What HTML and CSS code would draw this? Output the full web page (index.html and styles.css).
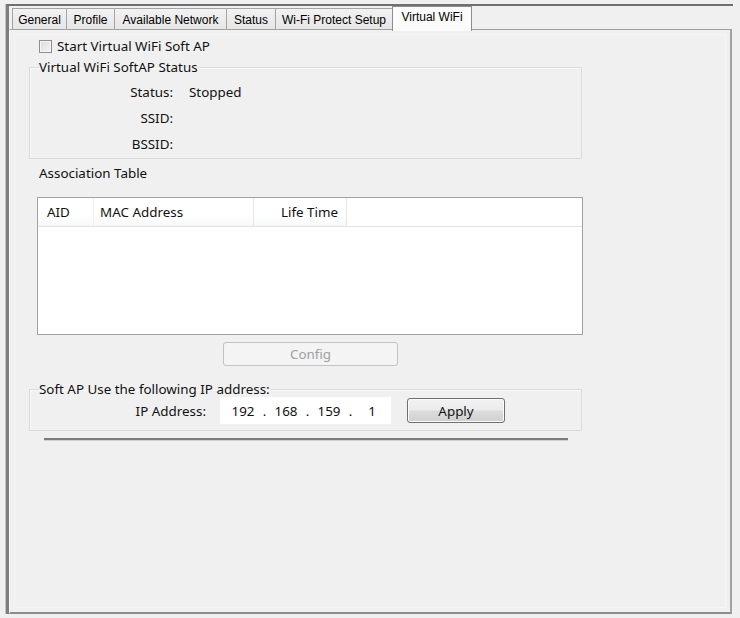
FILE: index.html
```html
<!DOCTYPE html>
<html>
<head>
<meta charset="utf-8">
<link rel="stylesheet" href="styles.css">
</head>
<body>
<div class="frame">
  <div class="tabs">
    <div class="tab w-general">General</div>
    <div class="tab w-profile">Profile</div>
    <div class="tab w-avail">Available Network</div>
    <div class="tab w-status">Status</div>
    <div class="tab w-wps">Wi-Fi Protect Setup</div>
    <div class="tab active w-vwifi">Virtual WiFi</div>
  </div>
  <div class="panel">
    <div class="content">
      <label class="check"><span class="box"></span><span>Start Virtual WiFi Soft AP</span></label>
      <fieldset class="group status-group">
        <legend>Virtual WiFi SoftAP Status</legend>
        <div class="info-grid">
          <span class="k">Status:</span><span class="v">Stopped</span>
          <span class="k">SSID:</span><span class="v"></span>
          <span class="k">BSSID:</span><span class="v"></span>
        </div>
      </fieldset>
      <div class="section-label">Association Table</div>
      <div class="list">
        <div class="list-head">
          <div class="col aid">AID</div>
          <div class="col mac">MAC Address</div>
          <div class="col life">Life Time</div>
        </div>
      </div>
      <div class="btn disabled config">Config</div>
      <fieldset class="group ip-group">
        <legend>Soft AP Use the following IP address:</legend>
        <div class="ip-row">
          <span class="ip-label">IP Address:</span>
          <div class="ip-field">
            <span class="oct">192</span><span class="dot">.</span>
            <span class="oct">168</span><span class="dot">.</span>
            <span class="oct">159</span><span class="dot">.</span>
            <span class="oct">1</span>
          </div>
          <div class="btn apply">Apply</div>
        </div>
      </fieldset>
      <div class="sep"></div>
    </div>
  </div>
</div>
</body>
</html>
```
FILE: styles.css
```css
* { box-sizing: border-box; }
html, body { margin: 0; padding: 0; }
body {
  background: #f0f0f0;
  font-family: "Noto Sans", "Liberation Sans", sans-serif;
  font-size: 13.4px;
  color: #111;
  width: 740px;
  height: 618px;
  overflow: hidden;
}
.frame {
  margin: 4px 0 0 6px;
  width: 727px;
  height: 610px;
  border-top: 2px solid #707070;
  border-left: 3px solid #7e7e7e;
  box-shadow: -1px 0 0 #c6c6c6;
}
.tabs {
  display: flex;
  align-items: flex-end;
  height: 23px;
  padding-left: 3px;
  font-family: "Liberation Sans", Arial, sans-serif;
  font-size: 12px;
  color: #000;
}
.tab {
  height: 21px;
  border: 1px solid #a4a4a4;
  border-bottom: none;
  background: linear-gradient(#f2f2f2, #e6e6e6);
  display: flex;
  align-items: center;
  justify-content: center;
  padding-top: 1px;
  margin-left: -1px;
  white-space: nowrap;
}
.tab:first-child { margin-left: 0; }
.tab.active {
  height: 25px;
  margin-bottom: -2px;
  background: #fbfbfb;
  border-color: #8e8e8e;
  position: relative;
  z-index: 2;
  padding-top: 0;
  padding-bottom: 4px;
}
.w-general { width: 55px; }
.w-profile { width: 49px; }
.w-avail { width: 113px; }
.w-status { width: 50px; }
.w-wps { width: 118px; }
.w-vwifi { width: 80px; }

.panel {
  width: 723px;
  height: 585px;
  border-top: 1px solid #a0a0a0;
  border-right: 2px solid #a2a2a2;
  border-bottom: 2px solid #8c8c8c;
  border-left: 1px solid #fafafa;
  box-shadow: inset 0 0 0 4px #f0f0f0, inset 0 0 0 5px #f5f5f5;
  position: relative;
}
.content {
  padding: 8px 0 0 19px;
}
.check {
  display: flex;
  align-items: center;
  height: 16px;
  margin-left: 10px;
  gap: 5px;
}
.box {
  width: 13px;
  height: 13px;
  border: 1px solid #8e8f8f;
  background: linear-gradient(135deg, #dcdcdc, #f4f4f4);
  box-shadow: inset 0 0 0 1px #f4f4f4;
}
.group {
  width: 553px;
  margin: 6px 0 0 0;
  padding: 5px 0 1px 0;
  border: 1px solid #dadada;
  box-shadow: inset 1px 1px 0 #fafafa;
  min-inline-size: 0;
}
.group legend {
  padding: 0;
  margin-left: 9px;
  line-height: 14px;
}
.info-grid {
  display: grid;
  grid-template-columns: 143px 1fr;
  grid-auto-rows: 26px;
  column-gap: 16px;
  align-items: center;
}
.info-grid .k { text-align: right; }
.section-label {
  margin: 6px 0 0 10px;
  line-height: 16px;
}
.list {
  margin: 16px 0 0 8px;
  width: 546px;
  height: 138px;
  background: #fff;
  border: 1px solid #a2a2a2;
}
.list-head {
  display: flex;
  height: 29px;
  border-bottom: 1px solid #e2e2e2;
}
.col {
  height: 28px;
  display: flex;
  align-items: center;
  border-right: 1px solid #e6e6e6;
  background: linear-gradient(#ffffff, #ffffff 60%, #f7f8f9);
}
.aid { width: 56px; padding-left: 9px; border-right-color: #f1f1f1; }
.mac { width: 160px; padding-left: 6px; }
.life { width: 93px; justify-content: flex-end; padding-right: 8px; }
.btn {
  height: 24px;
  border-radius: 3px;
  display: flex;
  align-items: center;
  justify-content: center;
}
.config {
  margin: 7px 0 0 194px;
  width: 175px;
  border: 1px solid #c2c2c2;
  background: #f4f4f4;
  color: #a0a0a0;
  padding-bottom: 1px;
}
.ip-group {
  margin-top: 16px;
  padding: 1px 0 6px 0;
}
.ip-row {
  display: flex;
  align-items: center;
  height: 27px;
}
.ip-label {
  width: 176px;
  text-align: right;
}
.ip-field {
  margin-left: 14px;
  width: 171px;
  height: 27px;
  background: #fff;
  display: flex;
  align-items: center;
  padding-left: 11px;
}
.oct { width: 24px; text-align: center; }
.dot { width: 19px; text-align: center; }
.apply {
  margin-left: 16px;
  width: 98px;
  height: 25px;
  border: 1px solid #707070;
  background: linear-gradient(#f2f2f2 0%, #ebebeb 48%, #dddddd 52%, #cfcfcf 100%);
  box-shadow: inset 0 0 0 1px #fbfbfb;
  color: #111;
}
.sep {
  margin: 7px 0 0 15px;
  width: 524px;
  border-top: 2px solid #7c7c7c;
  border-bottom: 1px solid #d0d0d0;
}
```
